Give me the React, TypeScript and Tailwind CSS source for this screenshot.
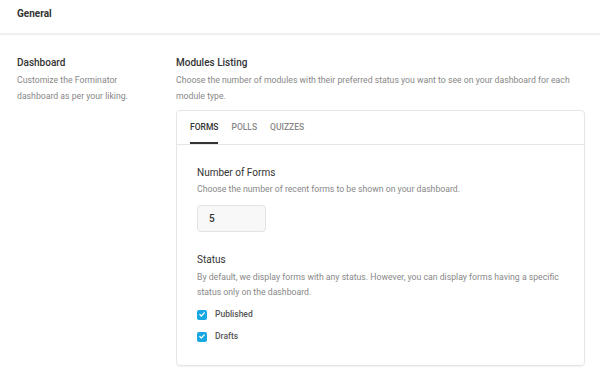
import { useState } from 'react'

const tabs = ['Forms', 'Polls', 'Quizzes']

function Check({ label, checked, onToggle }: { label: string; checked: boolean; onToggle: () => void }) {
  return (
    <label className="flex items-center gap-[8px] h-[11px] cursor-pointer select-none" onClick={onToggle}>
      <span
        className={`w-[10px] h-[10px] rounded-[2px] flex items-center justify-center ${checked ? 'bg-[#17a8e3]' : 'bg-white border border-[#ccc]'}`}
      >
        {checked && (
          <svg width="6" height="5" viewBox="0 0 7 6" fill="none">
            <path d="M0.8 3.1 L2.7 4.8 L6.2 1" stroke="white" strokeWidth="1.5" strokeLinecap="round" strokeLinejoin="round" />
          </svg>
        )}
      </span>
      <span className="text-[8.5px] font-medium text-[#555] leading-none">{label}</span>
    </label>
  )
}

export default function App() {
  const [tab, setTab] = useState('Forms')
  const [published, setPublished] = useState(true)
  const [drafts, setDrafts] = useState(true)

  return (
    <div className="w-[600px] h-[382px] bg-white overflow-hidden font-['Roboto',sans-serif] text-[#333]">
      {/* Header */}
      <div className="h-[35px] border-b-2 border-[#f0f0f0] px-[17px] pt-[6px]">
        <span className="block text-[10px] font-bold text-[#333] leading-[16px]">General</span>
      </div>

      <div className="flex pt-[21px]">
        {/* Left column */}
        <div className="w-[176px] pl-[17px] pr-[40px] shrink-0">
          <h2 className="text-[10px] font-medium text-[#333] leading-[14px]">Dashboard</h2>
          <p className="text-[8.7px] text-[#888] leading-[16px] mt-[2px]">
            Customize the Forminator dashboard as per your liking.
          </p>
        </div>

        {/* Right column */}
        <div className="w-[409px]">
          <h2 className="text-[10px] font-medium text-[#333] leading-[14px]">Modules Listing</h2>
          <p className="text-[8.7px] text-[#888] leading-[16px] mt-[2px]">
            Choose the number of modules with their preferred status you want to see on your dashboard for each module type.
          </p>

          <div className="mt-[6px] h-[256px] border border-[#e6e6e6] rounded-[4px] shadow-[0_1px_1px_rgba(0,0,0,0.05)]">
            <div className="flex gap-[13px] px-[13px] border-b border-[#e6e6e6] h-[34px]">
              {tabs.map((t) => (
                <button
                  key={t}
                  onClick={() => setTab(t)}
                  className={`h-full text-[8.5px] uppercase font-medium leading-none border-b-2 pt-[2px] ${tab === t ? 'text-[#333] border-[#333]' : 'text-[#888] border-transparent'}`}
                >
                  {t}
                </button>
              ))}
            </div>

            <div className="px-[20px] pt-[21px]">
              <h3 className="text-[10px] text-[#333] leading-[14px]">Number of Forms</h3>
              <p className="text-[8.7px] text-[#888] leading-[14px] mt-[2px]">
                Choose the number of recent forms to be shown on your dashboard.
              </p>
              <div className="mt-[9px] w-[69px] h-[27px] bg-[#f8f8f8] border border-[#e2e2e2] rounded-[4px] flex items-center px-[11px] text-[10px] font-medium text-[#333]">
                5
              </div>

              <h3 className="mt-[21px] text-[10px] text-[#333] leading-[14px]">Status</h3>
              <p className="text-[8.7px] text-[#888] leading-[15px] mt-[3px]">
                By default, we display forms with any status. However, you can display forms having a specific status only on the dashboard.
              </p>
              <div className="mt-[9px] flex flex-col gap-[11px]">
                <Check label="Published" checked={published} onToggle={() => setPublished((v) => !v)} />
                <Check label="Drafts" checked={drafts} onToggle={() => setDrafts((v) => !v)} />
              </div>
            </div>
          </div>
        </div>
      </div>
    </div>
  )
}
